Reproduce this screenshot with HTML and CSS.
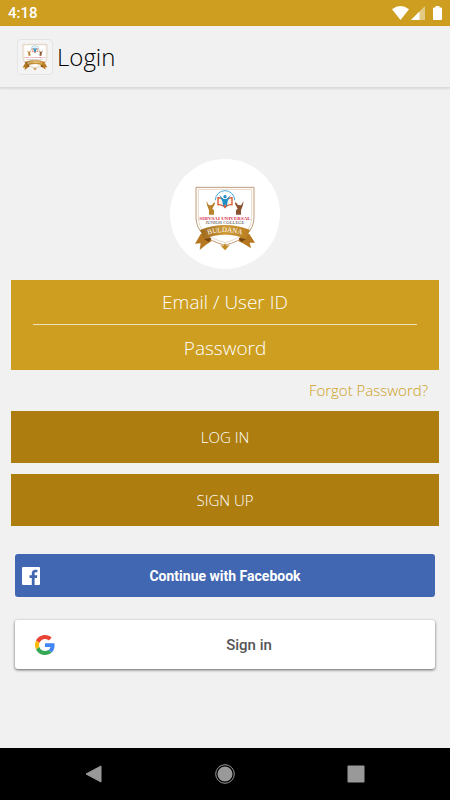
FILE: index.html
```html
<!DOCTYPE html>
<html lang="en">
<head>
  <meta charset="UTF-8">
  <meta name="viewport" content="width=device-width, initial-scale=1.0">
  <title>Login</title>
  <link rel="stylesheet" href="styles.css">
</head>
<body>
  <div class="status-bar">
    <span class="clock">4:18</span>
    <div class="status-icons">
      <svg width="17" height="14" viewBox="0 0 17 14"><path d="M0 3.2Q8.500-3 17 3.200L8.500 14Z" fill="#fff"/></svg>
      <svg width="14" height="14" viewBox="0 0 14 14"><path d="M14 0V14H0Z" fill="#fff" opacity=".45"/><path d="M8.500 5.500V14H0Z" fill="#fff"/></svg>
      <svg class="battery" width="9" height="14" viewBox="0 0 9 14"><path d="M2.500 0h4v1.500H8q1 0 1 1V13q0 1-1 1H1q-1 0-1-1V2.500q0-1 1-1h1.500z" fill="#fff"/></svg>
    </div>
  </div>

  <header class="app-bar">
    <div class="app-icon">
      <svg width="28" height="28" viewBox="0 0 198 204"><use href="#crest"/></svg>
    </div>
    <h1>Login</h1>
  </header>

  <main class="content">
    <div class="logo">
      <svg width="66" height="68" viewBox="0 0 198 204">
        <defs>
          <linearGradient id="gold" x1="0" x2="1">
            <stop offset="0" stop-color="#9c661c"/>
            <stop offset=".5" stop-color="#cf9c38"/>
            <stop offset="1" stop-color="#b97d22"/>
          </linearGradient>
        </defs>
        <g id="crest">
          <path d="M12 10H186V100Q186 160 99 184Q12 160 12 100Z" fill="#fff" stroke="#c09a78" stroke-width="3"/>
          <path d="M19 16H179V100Q179 154 99 176Q19 154 19 100Z" fill="none" stroke="#dcc6aa" stroke-width="2"/>
          <!-- book and figure -->
          <path d="M70 49A29 29 0 0 1 128 49" fill="none" stroke="#45a9da" stroke-width="3"/>
          <path d="M78 41q11 0 21 9v19q-10-8-21-7z" fill="#fff3e6" stroke="#d9532f" stroke-width="4"/>
          <path d="M120 41q-11 0-21 9v19q10-8 21-7z" fill="#fff3e6" stroke="#d9532f" stroke-width="4"/>
          <circle cx="99" cy="38" r="5" fill="#1e8fc8"/>
          <path d="M82 33l12 12h10l12-12-9 19-3 18-5-11-5 11-3-18z" fill="#1e8fc8"/>
          <!-- hands -->
          <path d="M43 51l8 13 9-1 7-9 2 5-8 15 5 5v13h-15v-13l-5-13z" fill="#b9822d"/>
          <path d="M155 51l-8 13-9-1-7-9-2 5 8 15-5 5v13h15v-13l5-13z" fill="#8c5330"/>
          <text class="crest-name" x="99" y="107" text-anchor="middle">SHIVSAI UNIVERSAL</text>
          <text class="crest-college" x="99" y="121" text-anchor="middle">JUNIOR COLLEGE</text>
          <!-- ribbon -->
          <path d="M26 150L9 179l17-1-3 20q19-17 36-27l-9-23z" fill="#b57821"/>
          <path d="M172 150l17 26-16 0 4 17q-20-14-38-22l9-23z" fill="#b57821"/>
          <path d="M36 165l22-3-8 12zM162 165l-22-3 8 12z" fill="#70440e"/>
          <path d="M24 138Q99 108 174 138L162 165Q99 140 36 165Z" fill="url(#gold)"/>
          <path id="ribbon-line" d="M34 157Q99 131 164 157" fill="none"/>
          <text class="crest-ribbon" text-anchor="middle"><textPath href="#ribbon-line" startOffset="50%">BULDANA</textPath></text>
          <path d="M85 184l9 1 5-7 5 7 9-1-7 7-7 8-7-8z" fill="#c28a24"/>
        </g>
      </svg>
    </div>

    <form class="login-form">
      <div class="fields">
        <input type="text" name="user" placeholder="Email / User ID" aria-label="Email / User ID">
        <input type="password" name="password" placeholder="Password" aria-label="Password">
      </div>
      <a href="#" class="forgot-password">Forgot Password?</a>
      <button type="submit" class="main-button">LOG IN</button>
      <button type="button" class="main-button">SIGN UP</button>
    </form>

    <div class="social">
      <button type="button" class="facebook-button">
        <svg width="18" height="18" viewBox="0 0 18 18"><rect width="18" height="18" rx="1" fill="#fff"/><path d="M9.800 18V11H7.500V8.300h2.300V6.200c0-2.300 1.400-3.500 3.500-3.500l2.100.1v2.400h-1.500c-1.100 0-1.300.5-1.300 1.300v1.800h2.700L14.900 11h-2.300v7z" fill="#4267b2"/></svg>
        <span>Continue with Facebook</span>
      </button>
      <button type="button" class="google-button">
        <svg width="20" height="20" viewBox="0 0 48 48">
          <path fill="#ea4335" d="M24 9.500c3.540 0 6.710 1.220 9.210 3.600l6.850-6.850C35.900 2.380 30.470 0 24 0 14.620 0 6.510 5.380 2.560 13.220l7.980 6.190C12.430 13.720 17.740 9.500 24 9.500z"/>
          <path fill="#4285f4" d="M46.980 24.550c0-1.570-.15-3.090-.38-4.550H24v9.020h12.940c-.58 2.960-2.260 5.480-4.780 7.180l7.730 6c4.510-4.180 7.090-10.360 7.090-17.650z"/>
          <path fill="#fbbc05" d="M10.530 28.590c-.48-1.450-.76-2.990-.76-4.590s.27-3.140.76-4.590l-7.980-6.190C.92 16.460 0 20.120 0 24c0 3.880.92 7.540 2.560 10.780l7.970-6.190z"/>
          <path fill="#34a853" d="M24 48c6.480 0 11.930-2.130 15.890-5.810l-7.730-6c-2.150 1.450-4.920 2.300-8.160 2.300-6.260 0-11.570-4.220-13.470-9.910l-7.980 6.190C6.510 42.620 14.620 48 24 48z"/>
        </svg>
        <span>Sign in</span>
      </button>
    </div>
  </main>

  <nav class="nav-bar">
    <button type="button" aria-label="Back"><svg width="20" height="20" viewBox="0 0 20 20"><path d="M17 2v16L2 10z" fill="#999" stroke="#999" stroke-linejoin="round"/></svg></button>
    <button type="button" aria-label="Home"><svg width="20" height="20" viewBox="0 0 20 20"><circle cx="10" cy="10" r="9.300" fill="none" stroke="#999"/><circle cx="10" cy="10" r="7.500" fill="#999"/></svg></button>
    <button type="button" aria-label="Recents"><svg width="20" height="20" viewBox="0 0 20 20"><rect x="1.500" y="1.500" width="17" height="17" rx="1" fill="#999"/></svg></button>
  </nav>
</body>
</html>
```
FILE: styles.css
```css
* {
  box-sizing: border-box;
}

body {
  font-family: "Open Sans", "Noto Sans", sans-serif;
  font-weight: 300;
  background-color: #f1f1f1;
  margin: 0;
  min-height: 100vh;
  display: flex;
  flex-direction: column;
}

svg {
  display: block;
}

button {
  border: none;
  cursor: pointer;
}

.status-bar {
  height: 26px;
  padding: 0 8px;
  background-color: #cd9e20;
  color: #ffffff;
  display: flex;
  justify-content: space-between;
  align-items: center;
}

.clock {
  font-family: Roboto, sans-serif;
  font-size: 15px;
  font-weight: 500;
}

.status-icons {
  display: flex;
  gap: 2px;
}

.battery {
  margin-left: 6px;
}

.app-bar {
  height: 62px;
  padding: 0 17px;
  display: flex;
  align-items: center;
  gap: 4px;
  border-bottom: 1px solid #dcdcdc;
  box-shadow: 0 1px 2px rgba(0, 0, 0, 0.1);
}

.app-bar h1 {
  margin: 0;
  font-size: 24px;
  font-weight: 300;
  color: #000000;
}

.app-icon {
  width: 36px;
  height: 36px;
  display: flex;
  align-items: center;
  justify-content: center;
  background-color: #f4f4f4;
  border: 1px solid #e4e4e4;
  border-radius: 4px;
}

.content {
  flex: 1;
  padding: 71px 11px 20px;
}

.logo {
  width: 110px;
  height: 110px;
  margin: 0 auto 11px;
  padding-top: 8px;
  display: flex;
  align-items: center;
  justify-content: center;
  background-color: #ffffff;
  border-radius: 50%;
}

.crest-name,
.crest-college,
.crest-ribbon {
  font-family: "Liberation Serif", serif;
}

.crest-name {
  font-size: 15px;
  font-weight: 700;
  fill: #d8304f;
}

.crest-college {
  font-size: 14px;
  fill: #4a3f45;
}

.crest-ribbon {
  font-size: 21px;
  fill: #ffffff;
}

.login-form {
  display: flex;
  flex-direction: column;
}

.fields {
  padding: 0 22px;
  background-color: #cd9e20;
}

.fields input {
  display: block;
  width: 100%;
  height: 45px;
  padding: 0;
  border: none;
  background: none;
  color: #ffffff;
  font-family: inherit;
  font-size: 19px;
  font-weight: 300;
  text-align: center;
}

.fields input:first-child {
  border-bottom: 1px solid #eee0bc;
}

.fields input::placeholder {
  color: #ffffff;
  opacity: 1;
}

.fields input:focus {
  outline: none;
}

.forgot-password {
  align-self: flex-end;
  margin-right: 11px;
  font-size: 15px;
  line-height: 41px;
  color: #cd9e20;
  text-decoration: none;
}

.main-button {
  height: 52px;
  margin-bottom: 11px;
  background-color: #ad7e0f;
  color: #ffffff;
  font-family: inherit;
  font-size: 15px;
  font-weight: 300;
}

.social {
  padding: 17px 4px 0;
  display: flex;
  flex-direction: column;
  gap: 23px;
}

.facebook-button,
.google-button {
  display: flex;
  align-items: center;
  font-family: Roboto, sans-serif;
  border-radius: 3px;
}

.facebook-button {
  height: 43px;
  padding: 0 25px 0 7px;
  background-color: #4267b2;
  color: #ffffff;
  font-size: 14px;
  font-weight: 700;
}

.google-button {
  height: 49px;
  padding: 0 0 0 20px;
  gap: 8px;
  background-color: #ffffff;
  color: #555555;
  font-size: 15px;
  font-weight: 500;
  box-shadow: 0 1px 3px rgba(0, 0, 0, 0.6);
}

.facebook-button span,
.google-button span {
  flex: 1;
}

.nav-bar {
  height: 52px;
  padding: 0 28px;
  background-color: #000000;
  display: flex;
  justify-content: space-between;
  align-items: center;
}

.nav-bar button {
  width: 132px;
  height: 52px;
  padding: 0;
  background: none;
  display: flex;
  align-items: center;
  justify-content: center;
}
```
